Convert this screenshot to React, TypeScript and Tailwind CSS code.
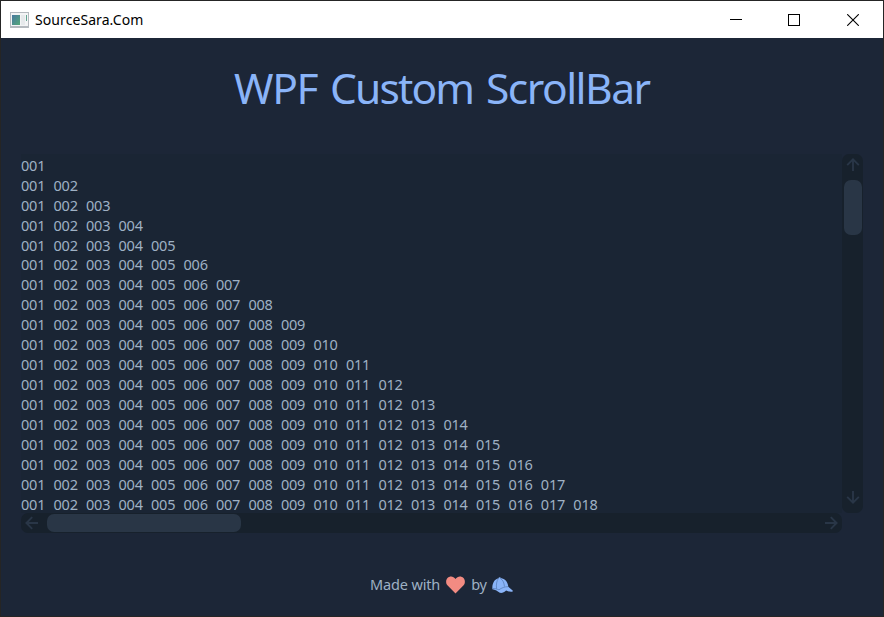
import type { ReactNode } from 'react';

const rows = Array.from({ length: 18 }, (_, i) =>
  Array.from({ length: i + 1 }, (_, n) => String(n + 1).padStart(3, '0')).join('  ')
);

function Arrow({ className }: { className: string }) {
  return (
    <svg viewBox="0 0 14 14" className={`block h-[14px] w-[14px] shrink-0 ${className}`}>
      <path d="M7 13V1.5M1.2 7.2L7 1.4l5.8 5.8" fill="none" stroke="#293647" strokeWidth="1.9" />
    </svg>
  );
}

function TitleBar() {
  return (
    <header className="flex h-[37px] shrink-0 items-center bg-white pl-[9px] text-black">
      <svg width="19" height="16" viewBox="0 0 19 16" shapeRendering="crispEdges">
        <rect width="19" height="16" fill="#b4b9be" />
        <rect x="1" y="1" width="17" height="13" fill="#f3f4f5" />
        <defs>
          <linearGradient id="app" x1="0" y1="0" x2="1" y2="1">
            <stop offset="0" stopColor="#4878a0" />
            <stop offset="1" stopColor="#54a878" />
          </linearGradient>
        </defs>
        <rect x="2" y="3" width="8" height="10" fill="url(#app)" />
        <rect x="11" y="3" width="4" height="10" fill="#e6e9eb" />
        <rect x="16" y="3" width="1" height="6" fill="#62a491" />
      </svg>
      <span className="ml-[6px] whitespace-pre text-[14px] leading-5 tracking-[0.08px]">SourceSara.Com</span>
      <div className="ml-auto flex items-center pr-[24px]">
        <svg width="12" height="12" shapeRendering="crispEdges">
          <path d="M0 5.5h12" stroke="#000" />
        </svg>
        <svg width="12" height="12" className="ml-[46px]" shapeRendering="crispEdges">
          <rect x=".5" y=".5" width="11" height="11" fill="none" stroke="#000" />
        </svg>
        <svg width="12" height="12" className="ml-[47px]">
          <path d="M.2.2l11.6 11.6M11.8.2L.2 11.8" stroke="#000" strokeWidth="1.1" />
        </svg>
      </div>
    </header>
  );
}

function Window({ children }: { children: ReactNode }) {
  return (
    <div className="flex h-[617px] w-[884px] flex-col overflow-hidden border border-[#252525] bg-[#1c2637] font-['Noto_Sans',sans-serif]">
      <TitleBar />
      {children}
    </div>
  );
}

export default function App() {
  return (
    <Window>
      <h1 className="mt-[20px] flex h-[60px] whitespace-pre pl-[233px] text-[42.5px] leading-[60px] text-[#8ab4f8]">
        <span className="w-[96px] tracking-[-1.4px]">WPF </span>
        <span className="w-[156px] tracking-[-1.85px]">Custom </span>
        <span className="tracking-[-1.5px]">ScrollBar</span>
      </h1>

      <main className="ml-5 mt-[36px] grid h-[379px] w-[842px] shrink-0 grid-cols-[821px_21px] grid-rows-[359px_20px]">
        <div className="overflow-hidden bg-[#1a2534] pt-[1.7px] text-[14.5px] leading-[19.95px] tracking-[-0.21px] text-[#9fb1c4] [word-spacing:0.56px]">
          {rows.map((row) => (
            <div key={row} className="whitespace-pre">{row}</div>
          ))}
        </div>

        {/* Vertical scroll bar */}
        <div className="flex flex-col items-center rounded-[7px] bg-[#17212c] pt-[4px] pb-[9px]">
          <Arrow className="" />
          <div className="mt-2 h-[55px] w-[18px] rounded-[7px] bg-[#293646]" />
          <Arrow className="mt-auto rotate-180" />
        </div>

        {/* Horizontal scroll bar */}
        <div className="flex items-center rounded-[7px] bg-[#17212c] px-[4px]">
          <Arrow className="-rotate-90" />
          <div className="ml-2 h-[18px] w-[194px] rounded-[7px] bg-[#293646]" />
          <Arrow className="ml-auto rotate-90" />
        </div>
      </main>

      <footer className="mt-[41px] flex h-5 items-center whitespace-pre pl-[369px] text-[14.5px] leading-5 text-[#9fb1c4]">
        <span className="tracking-[-0.15px]">Made with</span>
        <svg width="19" height="18" viewBox="0 0 19 18" className="ml-[6px] mt-[2px]">
          <path d="M9.5 17.4L1.4 9.2C-.4 7.2-.2 3.7 1.5 2 3.8-.3 7.6 0 9.5 3c1.900-3 5.700-3.300 8-1 1.700 1.700 1.900 5.200.1 7.200z" fill="#f28b82" />
        </svg>
        <span className="ml-[6px] tracking-[-0.2px]">by</span>
        <svg width="21" height="17" viewBox="0 0 21 17" className="ml-[5px] mt-[2px]">
          <path d="M.4 12.200C-.1 6.700 2.300 2.100 6.500 1.200L7 .3l1.500.2.300.6c4.200.700 7.100 4 7.500 8.600l4.600 4.100-.5.9c-2.600.300-4.400-.3-6.300-1.100-1.700 1.600-4.200 2.800-6.300 2.200C6 14.200 3 12.500.4 12.200z" fill="#8ab4f8" />
          <path d="M6.600 1.200C4.600 3.500 4 8 4.600 11.800M8 1.200c3 1.700 4.300 4.800 4.400 8.400M.8 11.500c2.300-.2 4.300.8 6.200 1.300 2.400-1.900 5.900-3.200 9-3.100" fill="none" stroke="#4a6ea8" strokeWidth=".6" />
        </svg>
      </footer>
    </Window>
  );
}
